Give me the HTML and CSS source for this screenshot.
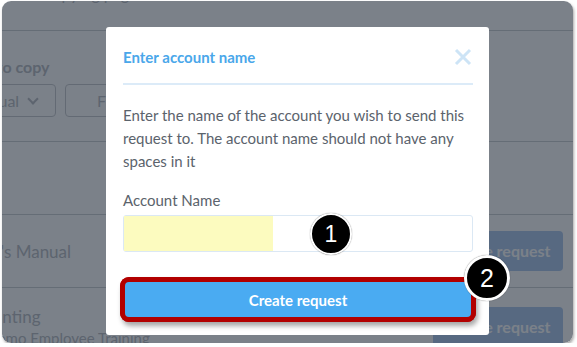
FILE: index.html
```html
<!DOCTYPE html>
<html lang="en">
<head>
  <meta charset="UTF-8" />
  <title>Enter account name</title>
  <link rel="stylesheet" href="styles.css">
</head>
<body>
  <div class="frame">
    <!-- page behind the modal -->
    <div class="page">
      <div class="page-top">
        <span class="crumb">Copying pages</span>
      </div>
      <div class="copy-section">
        <div class="copy-label">Page to copy</div>
        <div class="copy-controls">
          <div class="select">Manual <span class="chev"></span></div>
          <div class="filter">Find a page</div>
        </div>
      </div>
      <div class="list-gap"></div>
      <div class="row">
        <div class="row-name">
          <div class="row-title">Owner's Manual</div>
        </div>
        <div class="row-btn">Create request</div>
      </div>
      <div class="row row-top">
        <div class="row-name">
          <div class="row-title">Accounting</div>
          <div class="row-sub">For Demo Employee Training</div>
        </div>
        <div class="row-btn">Create request</div>
      </div>
    </div>

    <div class="overlay"></div>

    <!-- modal -->
    <div class="modal">
      <div class="modal-header">
        <h2>Enter account name</h2>
        <span class="close">
          <svg width="18" height="18" viewBox="0 0 18 18">
            <path d="M2 2L16 16M16 2L2 16" stroke="#cde4f6" stroke-width="3" fill="none"/>
          </svg>
        </span>
      </div>
      <p class="modal-text">Enter the name of the account you wish to send this request to. The account name should not have any spaces in it</p>
      <label class="field-label">Account Name</label>
      <div class="field">
        <span class="field-mark"></span>
        <span class="badge badge-one">1</span>
      </div>
      <div class="submit-wrap">
        <button class="submit">Create request</button>
        <span class="badge badge-two">2</span>
      </div>
    </div>
  </div>
</body>
</html>
```

FILE: styles.css
```css
body {
  margin: 0;
  background: #fff;
  font-family: 'Lato', 'Open Sans', sans-serif;
}

.frame {
  position: relative;
  width: 571px;
  height: 342px;
  margin: 1px 0 0 2px;
  border-radius: 9px;
  overflow: hidden;
  box-shadow: 1px 2px 3px rgba(0, 0, 0, 0.35);
}

/* Page behind */
.page {
  height: 100%;
  background: #fff;
  color: #b3b7bd;
}

.page-top {
  height: 29px;
  border-bottom: 1px solid #c9ccd0;
  position: relative;
}

.crumb {
  position: absolute;
  left: 40px;
  top: -17px;
  font-size: 16px;
}

.copy-section {
  padding: 26px 0 24px;
  border-bottom: 1px solid #c9ccd0;
}

.copy-label {
  margin-left: -44px;
  font-size: 16px;
  font-weight: 700;
  line-height: 20px;
}

.copy-controls {
  display: flex;
  gap: 9px;
  margin: 7px 0 0 -48px;
}

.select,
.filter {
  height: 33px;
  box-sizing: border-box;
  border: 1px solid #c3c6ca;
  border-radius: 4px;
  display: flex;
  align-items: center;
  font-size: 16px;
}

.select {
  width: 102px;
  padding-left: 12px;
}

.chev {
  width: 6px;
  height: 6px;
  border-right: 2px solid #b3b7bd;
  border-bottom: 2px solid #b3b7bd;
  transform: rotate(45deg);
  margin: -4px 0 0 10px;
}

.filter {
  width: 200px;
  padding-left: 31px;
}

.list-gap {
  height: 72px;
  border-bottom: 1px solid #c9ccd0;
}

.row {
  height: 72px;
  border-bottom: 1px solid #c9ccd0;
  display: flex;
  align-items: center;
  justify-content: space-between;
  padding-right: 10px;
}

.row-top {
  align-items: flex-start;
  padding-top: 18px;
}

.row-name {
  margin-left: -53px;
  padding-top: 2px;
}

.row-top .row-name {
  margin-left: -46px;
  padding-top: 0;
}

.row-title {
  font-size: 17px;
  line-height: 22px;
}

.row-sub {
  font-size: 15px;
  line-height: 20px;
  margin-left: 5px;
}

.row-btn {
  width: 130px;
  height: 40px;
  line-height: 40px;
  text-align: center;
  background: #a6c3ea;
  color: #fff;
  border-radius: 4px;
  font-size: 16px;
  font-weight: 700;
}

.row-top .row-btn {
  margin-top: 1px;
}

.overlay {
  position: absolute;
  inset: 0;
  background: rgba(35, 45, 58, 0.6);
}

/* Modal */
.modal {
  position: absolute;
  left: 104px;
  top: 26px;
  width: 383px;
  height: 308px;
  box-sizing: border-box;
  background: #fff;
  border-radius: 3px;
  padding: 0 16px 0 17px;
}

.modal-header {
  height: 58px;
  display: flex;
  align-items: center;
  justify-content: space-between;
  border-bottom: 2px solid #dcebf8;
  padding-top: 3px;
  box-sizing: border-box;
}

.modal-header h2 {
  margin: 0;
  font-size: 15px;
  font-weight: 700;
  color: #4aa7ea;
}

.close {
  display: flex;
  margin-right: 1px;
}

.modal-text {
  margin: 19px 0 0;
  font-size: 15px;
  line-height: 23px;
  color: #5b636c;
}

.field-label {
  display: block;
  margin-top: 17px;
  font-size: 15px;
  line-height: 20px;
  color: #5b636c;
}

.field {
  position: relative;
  margin-top: 5px;
  height: 37px;
  box-sizing: border-box;
  border: 1px solid #dbe8f4;
  border-radius: 3px;
  display: flex;
}

.field-mark {
  width: 149px;
  background: #fcfbbf;
}

.badge {
  position: absolute;
  box-sizing: border-box;
  border-radius: 50%;
  background: #000;
  border: 2px solid #fff;
  color: #fff;
  font-family: 'Liberation Sans', Arial, sans-serif;
  display: flex;
  align-items: center;
  justify-content: center;
  box-shadow: 0 0 1px rgba(0, 0, 0, 0.6);
}

.badge-one {
  width: 42px;
  height: 42px;
  left: 186px;
  top: -3px;
  font-size: 23px;
}

.submit-wrap {
  position: relative;
  margin-top: 30px;
  padding: 0 2px;
}

.submit {
  display: block;
  width: 100%;
  height: 35px;
  border: none;
  border-radius: 4px;
  background: #4aabf2;
  color: #fff;
  font-family: inherit;
  font-size: 15px;
  font-weight: 700;
  outline: 4px solid #b20000;
  outline-offset: 1px;
  box-shadow: 0 0 0 5px #b20000, 2px 4px 5px 5px rgba(0, 0, 0, 0.35);
}

.badge-two {
  width: 46px;
  height: 46px;
  left: 341px;
  top: -27px;
  font-size: 25px;
  border-width: 3px;
}
```
